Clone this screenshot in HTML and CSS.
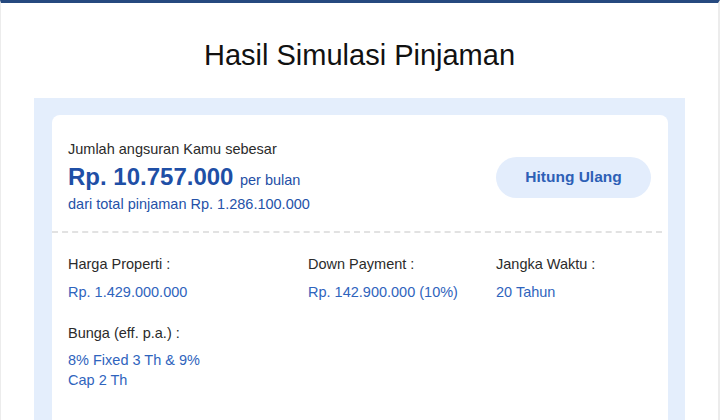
FILE: index.html
```html
<!DOCTYPE html>
<html>
<head>
<meta charset="utf-8">
<link rel="stylesheet" href="styles.css">
</head>
<body>
<div class="page">
  <h1 class="title">Hasil Simulasi Pinjaman</h1>
  <div class="panel">
    <div class="card">
      <div class="summary">
        <div class="summary-text">
          <div class="label">Jumlah angsuran Kamu sebesar</div>
          <div class="amount"><span class="amount-big">Rp. 10.757.000</span> <span class="amount-unit">per bulan</span></div>
          <div class="total">dari total pinjaman Rp. 1.286.100.000</div>
        </div>
        <button class="btn">Hitung Ulang</button>
      </div>
      <div class="divider"></div>
      <div class="details">
        <div class="item item-a">
          <div class="item-label">Harga Properti :</div>
          <div class="item-value">Rp. 1.429.000.000</div>
        </div>
        <div class="item item-b">
          <div class="item-label">Down Payment :</div>
          <div class="item-value">Rp. 142.900.000 (10%)</div>
        </div>
        <div class="item item-c">
          <div class="item-label">Jangka Waktu :</div>
          <div class="item-value">20 Tahun</div>
        </div>
        <div class="item item-a">
          <div class="item-label">Bunga (eff. p.a.) :</div>
          <div class="item-value narrow">8% Fixed 3 Th &amp; 9% Cap 2 Th</div>
        </div>
      </div>
    </div>
  </div>
</div>
</body>
</html>
```
FILE: styles.css
```css
html, body {
  margin: 0;
  padding: 0;
  background: #ffffff;
  font-family: "Liberation Sans", Arial, sans-serif;
}
.page {
  height: 420px;
  box-sizing: border-box;
  border-top: 3px solid #26497f;
  border-left: 1px solid #ececec;
  border-right: 2px solid #ececec;
  overflow: hidden;
}
.title {
  margin: 0;
  padding-top: 34px;
  height: 61px;
  box-sizing: content-box;
  text-align: center;
  font-size: 29px;
  font-weight: normal;
  color: #111;
  line-height: 36px;
}
.panel {
  margin: 0 33px 0 33px;
  background: #e4eefc;
  padding: 17px 17px 0 18px;
  height: 320px;
}
.card {
  background: #fff;
  border-radius: 8px 8px 0 0;
  height: 330px;
}
.summary {
  display: flex;
  align-items: center;
  justify-content: space-between;
  padding: 24px 17px 0 16px;
  height: 92px;
  box-sizing: content-box;
}
.summary-text {
  align-self: flex-start;
}
.label {
  font-size: 14.5px;
  line-height: 20px;
  color: #2b2b2b;
}
.amount {
  margin-top: 4px;
  line-height: 28px;
  color: #1f4fa6;
}
.amount-big {
  font-size: 24px;
  font-weight: bold;
}
.amount-unit {
  font-size: 14.5px;
  margin-left: 2px;
}
.total {
  margin-top: 0;
  font-size: 14.5px;
  line-height: 20px;
  color: #2552a8;
}
.btn {
  border: none;
  background: #e3edfc;
  color: #2d60b6;
  font-family: "Liberation Sans", Arial, sans-serif;
  font-weight: bold;
  font-size: 15.5px;
  width: 155px;
  height: 41px;
  border-radius: 21px;
  margin-top: -16px;
}
.divider {
  margin: 0 6px 0 0;
  border-top: 2px dashed #e2e2e2;
}
.details {
  display: grid;
  grid-template-columns: 240px 188px 1fr;
  row-gap: 21px;
  padding: 21px 16px 0 16px;
}
.item-label {
  font-size: 14.5px;
  line-height: 20px;
  color: #2b2b2b;
}
.item-value {
  margin-top: 8px;
  font-size: 14.5px;
  line-height: 20px;
  color: #2f64bd;
}
.narrow {
  max-width: 145px;
  margin-top: 7px;
}
.item-a { grid-column: 1; }
.item-b { grid-column: 2; }
.item-c { grid-column: 3; }
```
